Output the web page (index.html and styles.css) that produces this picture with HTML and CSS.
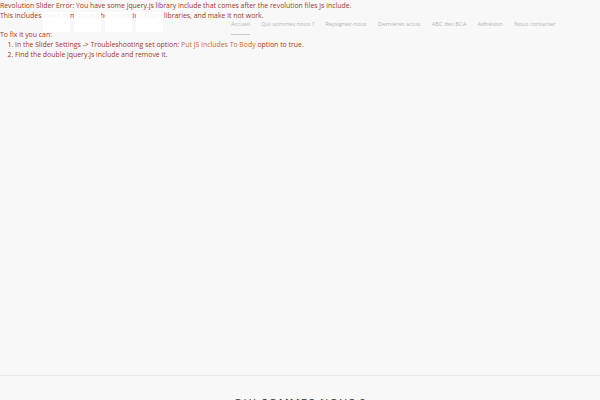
FILE: index.html
```html
<!DOCTYPE html>
<html lang="fr">
<head>
<meta charset="utf-8">
<title>Accueil</title>
<link rel="stylesheet" href="styles.css">
</head>
<body>
<div class="slider">
  <div class="error">
    <p class="line">Revolution Slider Error: You have some jquery.js library include that comes after the revolution files js include.</p>
    <p class="line">This includes make eliminates the revolution slider libraries, and make it not work.</p>
    <p class="line fix">To fix it you can:</p>
    <ol class="steps">
      <li>In the Slider Settings -&gt; Troubleshooting set option: <span class="hl">Put JS Includes To Body</span> option to true.</li>
      <li>Find the double jquery.js include and remove it.</li>
    </ol>
  </div>
  <header class="header">
    <div class="logo">
      <span class="block"></span>
      <span class="block"></span>
      <span class="block"></span>
      <span class="block"></span>
    </div>
    <nav class="nav">
      <a class="item active">Accueil</a>
      <a class="item">Qui sommes nous ?</a>
      <a class="item">Rejoignez-nous</a>
      <a class="item">Dernières actus</a>
      <a class="item">ABC des BCA</a>
      <a class="item">Adhésion</a>
      <a class="item">Nous contacter</a>
    </nav>
  </header>
</div>
<section class="about">
  <h2 class="title">QUI SOMMES NOUS ?</h2>
</section>
</body>
</html>
```
FILE: styles.css
```css
html, body {
  margin: 0;
  padding: 0;
  background: #f8f8f8;
  overflow: hidden;
}
body {
  font-family: "Open Sans", "Liberation Sans", sans-serif;
  width: 600px;
  height: 400px;
}
.slider {
  position: relative;
  height: 376px;
  border-bottom: 1px solid #e9e9e9;
  box-sizing: border-box;
}
.error {
  color: #a0332a;
  font-size: 6.9px;
  line-height: 10px;
  padding-top: 1px;
}
.line {
  margin: 0;
}
.fix {
  margin-top: 9px;
}
.steps {
  margin: 0;
  padding-left: 15px;
}
.hl {
  color: #c96a2c;
}
.header {
  position: absolute;
  left: 0;
  top: 0;
  width: 600px;
  height: 36px;
  display: flex;
  align-items: flex-start;
}
.logo {
  display: flex;
  gap: 4px;
  margin-left: 43px;
  margin-top: 12px;
}
.block {
  display: block;
  width: 27px;
  height: 20px;
  background: rgba(255, 255, 255, 0.92);
}
.nav {
  display: flex;
  gap: 11.3px;
  margin-left: 68px;
  margin-top: 20px;
}
.item {
  font-size: 5.8px;
  color: #b5b5b5;
  padding-bottom: 6px;
  white-space: nowrap;
}
.item.active {
  border-bottom: 1px solid #c8c8c8;
}
.about {
  padding-top: 20px;
  text-align: center;
}
.title {
  margin: 0;
  font-size: 11px;
  font-weight: 400;
  letter-spacing: 1.3px;
  color: #2b2b2b;
  line-height: 14px;
}
```
